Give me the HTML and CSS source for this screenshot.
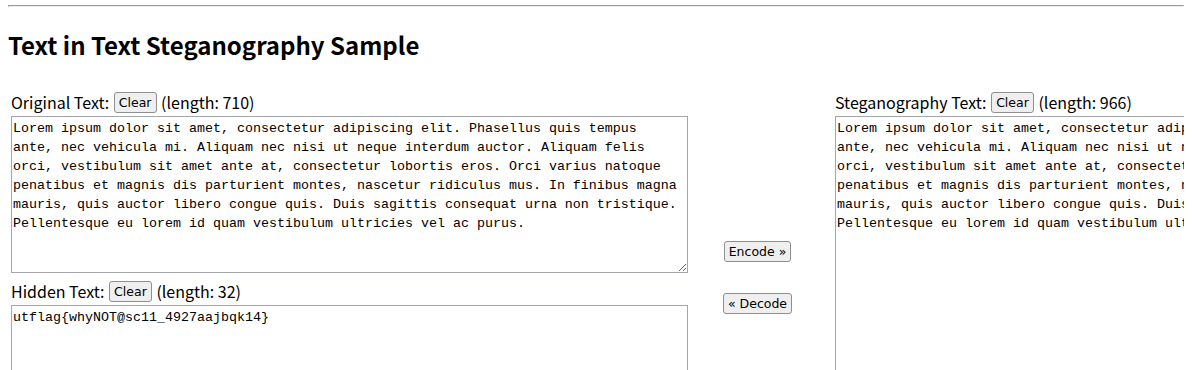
FILE: index.html
```html
<!DOCTYPE html>
<html lang="en">
<head>
    <meta charset="UTF-8">
    <title>Text in Text Steganography Sample</title>
    <link rel="stylesheet" href="styles.css">
</head>
<body>
    <hr>
    <h2>Text in Text Steganography Sample</h2>

    <div class="panes">
        <div class="pane">
            <div class="field-label">
                Original Text: <button class="btn" type="button">Clear</button> (length: 710)
            </div>
            <textarea class="text-box" spellcheck="false">Lorem ipsum dolor sit amet, consectetur adipiscing elit. Phasellus quis tempus ante, nec vehicula mi. Aliquam nec nisi ut neque interdum auctor. Aliquam felis orci, vestibulum sit amet ante at, consectetur lobortis eros. Orci varius natoque penatibus et magnis dis parturient montes, nascetur ridiculus mus. In finibus magna mauris, quis auctor libero congue quis. Duis sagittis consequat urna non tristique. Pellentesque eu lorem id quam vestibulum ultricies vel ac purus.</textarea>

            <div class="field-label">
                Hidden Text: <button class="btn" type="button">Clear</button> (length: 32)
            </div>
            <textarea class="text-box" spellcheck="false">utflag{whyNOT@sc11_4927aajbqk14}</textarea>
        </div>

        <div class="actions">
            <button class="btn" type="button">Encode &raquo;</button>
            <button class="btn" type="button">&laquo; Decode</button>
        </div>

        <div class="pane">
            <div class="field-label">
                Steganography Text: <button class="btn" type="button">Clear</button> (length: 966)
            </div>
            <textarea class="text-box tall" spellcheck="false">Lorem ipsum dolor sit amet, consectetur adipiscing elit. Phasellus quis tempus ante, nec vehicula mi. Aliquam nec nisi ut neque interdum auctor. Aliquam felis orci, vestibulum sit amet ante at, consectetur lobortis eros. Orci varius natoque penatibus et magnis dis parturient montes, nascetur ridiculus mus. In finibus magna mauris, quis auctor libero congue quis. Duis sagittis consequat urna non tristique. Pellentesque eu lorem id quam vestibulum ultricies vel ac purus.</textarea>
        </div>
    </div>
</body>
</html>
```

FILE: styles.css
```css
html {
    overflow: hidden;
}
body {
    margin: 0 8px;
    font-family: "Noto Sans CJK JP", "Noto Sans", sans-serif;
    font-size: 16px;
    color: #000;
    background: #fff;
}
hr {
    margin: 5px 0 0;
}
h2 {
    font-size: 24px;
    font-weight: bold;
    margin: 22px 0 31px;
    line-height: 32px;
}
.panes {
    display: flex;
    align-items: flex-start;
    width: 1600px;
    padding-left: 3px;
}
.pane {
    display: flex;
    flex-direction: column;
    flex: none;
    width: 677px;
}
.field-label {
    height: 21px;
    line-height: 21px;
    margin-bottom: 3px;
}
.btn {
    font-family: "DejaVu Sans", sans-serif;
    font-size: 12.5px;
    height: 21px;
    margin: 0 1px;
    padding: 0 4px;
    background: #efefef;
    border: 1px solid #8f8f8f;
    border-radius: 3px;
    color: #000;
    vertical-align: top;
}
.text-box {
    box-sizing: border-box;
    width: 677px;
    height: 157px;
    margin: 0 0 8px;
    padding: 2px 6px 2px 1px;
    font-family: "Liberation Mono", monospace;
    font-size: 13.33px;
    line-height: 19px;
    border: 1px solid #a5a5ad;
    color: #000;
}
.text-box.tall {
    height: 320px;
}
.actions {
    flex: none;
    box-sizing: border-box;
    width: 147px;
    display: flex;
    flex-direction: column;
    align-items: center;
    gap: 31px;
    padding: 149px 8px 0 0;
}
```
